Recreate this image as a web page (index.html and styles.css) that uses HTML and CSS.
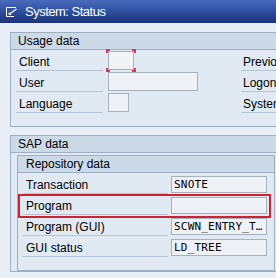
FILE: index.html
```html
<!DOCTYPE html>
<html>
<head>
<meta charset="utf-8">
<link rel="stylesheet" href="styles.css">
</head>
<body>
<div class="titlebar">
  <svg class="ticon" width="12" height="10" viewBox="0 0 12 10">
    <path d="M0.5 0.5H10M0.5 0.5V9.5H8" stroke="#fff" stroke-width="1" fill="none"/>
    <path d="M3.5 7L10.5 2" stroke="#fff" stroke-width="1.2" fill="none"/>
    <path d="M3 5.5L3 7.5L5 7.5" stroke="#fff" stroke-width="1" fill="none"/>
  </svg>
  <span class="ttext">System: Status</span>
</div>
<div class="main">
  <section class="group">
    <div class="ghead">Usage data</div>
    <div class="ubody">
      <div class="urow">
        <div class="lbl">Client</div>
        <div class="ucell"><div class="inp client"></div></div>
        <div class="lbl rlbl">Previous logon</div>
      </div>
      <div class="urow">
        <div class="lbl">User</div>
        <div class="ucell"><div class="inp user"></div></div>
        <div class="lbl rlbl">Logon date</div>
      </div>
      <div class="urow">
        <div class="lbl">Language</div>
        <div class="ucell"><div class="inp lang"></div></div>
        <div class="lbl rlbl">System time</div>
      </div>
    </div>
  </section>
  <section class="group">
    <div class="ghead">SAP data</div>
    <div class="sbody">
      <div class="repo">
        <div class="ghead">Repository data</div>
        <div class="rbody">
          <div class="rrow">
            <div class="lbl">Transaction</div>
            <div class="inp val">SNOTE</div>
          </div>
          <div class="rrow hl">
            <div class="lbl">Program</div>
            <div class="inp val"></div>
            <div class="redbox"></div>
          </div>
          <div class="rrow">
            <div class="lbl">Program (GUI)</div>
            <div class="inp val">SCWN_ENTRY_T…</div>
          </div>
          <div class="rrow">
            <div class="lbl">GUI status</div>
            <div class="inp val">LD_TREE</div>
          </div>
        </div>
      </div>
    </div>
  </section>
</div>
</body>
</html>
```
FILE: styles.css
```css
body {
  margin: 0;
  width: 276px;
  height: 278px;
  overflow: hidden;
  background: #e8eef5;
  font-family: "Liberation Sans", Arial, sans-serif;
  font-size: 12px;
  color: #000;
}
.titlebar {
  height: 23px;
  box-sizing: border-box;
  background: linear-gradient(#4a6bbd, #2e4e9f 50%, #1b3275);
  display: flex;
  align-items: center;
  padding-left: 6px;
  gap: 7px;
  color: #fff;
}
.ticon { display: block; }
.ttext {
  font-size: 13px;
  letter-spacing: -0.5px;
  line-height: 15px;
}
.main {
  padding: 9px 0 0 10px;
  display: flex;
  flex-direction: column;
  gap: 8px;
}
.group {
  width: 320px;
  border: 1px solid #9eafc1;
  background: #e1e9f2;
}
.ghead {
  height: 17px;
  box-sizing: border-box;
  padding: 1px 0 0 7px;
  line-height: 14px;
  background: #ccdae7;
  border-bottom: 1px solid #9eafc1;
  white-space: nowrap;
}
.ubody {
  padding: 0 0 13px 5px;
}
.urow {
  display: grid;
  grid-template-columns: 87px 138px 1fr;
}
.lbl {
  padding: 5px 0 1px 3px;
  line-height: 14px;
  border-bottom: 1px solid #b5c2cf;
  white-space: nowrap;
  overflow: hidden;
}
.rlbl { padding-left: 2px; }
.ucell {
  display: flex;
  align-items: center;
  padding-left: 5px;
}
.inp {
  background: #eef2f6;
  border: 1px solid #a7b1bc;
  box-sizing: border-box;
}
.client {
  width: 26px;
  height: 19px;
  position: relative;
  background: #f1f4f7;
}
.client::before {
  content: "";
  position: absolute;
  left: -3px;
  top: -3px;
  right: -3px;
  bottom: -3px;
  background:
    linear-gradient(#d23a5a, #d23a5a) left top / 4px 2px no-repeat,
    linear-gradient(#d23a5a, #d23a5a) left top / 2px 4px no-repeat,
    linear-gradient(#d23a5a, #d23a5a) right top / 4px 2px no-repeat,
    linear-gradient(#d23a5a, #d23a5a) right top / 2px 4px no-repeat,
    linear-gradient(#d23a5a, #d23a5a) left bottom / 4px 2px no-repeat,
    linear-gradient(#d23a5a, #d23a5a) left bottom / 2px 4px no-repeat,
    linear-gradient(#d23a5a, #d23a5a) right bottom / 4px 2px no-repeat,
    linear-gradient(#d23a5a, #d23a5a) right bottom / 2px 4px no-repeat;
}
.user { width: 90px; height: 19px; }
.lang { width: 21px; height: 19px; }
.sbody {
  padding: 2px 0 0 6px;
}
.repo {
  width: 258px;
  box-sizing: border-box;
  border: 1px solid #9eafc1;
  background: #e1e9f2;
}
.repo .ghead { padding-left: 8px; }
.rbody {
  padding: 0 0 13px 5px;
}
.rrow {
  display: grid;
  grid-template-columns: 145px 99px;
  position: relative;
}
.val {
  margin-left: 3px;
  width: 96px;
  height: 17px;
  align-self: end;
  margin-bottom: 1px;
  font-family: "DejaVu Sans Mono", monospace;
  font-size: 11px;
  letter-spacing: 0.2px;
  line-height: 15px;
  padding-left: 2px;
  white-space: nowrap;
  overflow: hidden;
}
.redbox {
  position: absolute;
  left: -5px;
  top: 0;
  width: 253px;
  height: 24px;
  box-sizing: border-box;
  border: 2px solid #cc2232;
}
```
